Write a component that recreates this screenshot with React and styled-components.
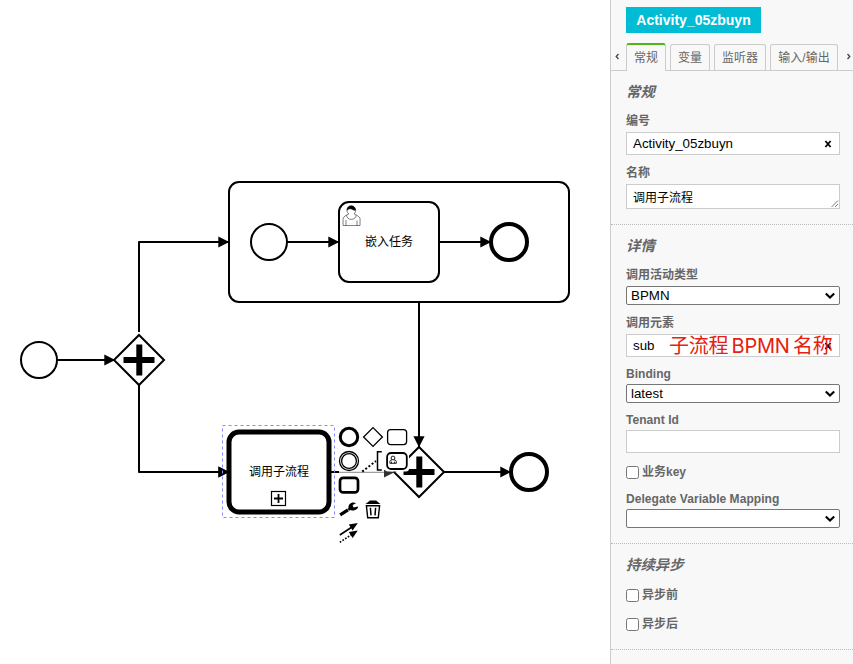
import React from "react";
import styled, { createGlobalStyle, css } from "styled-components";

const Global = createGlobalStyle`
  * { box-sizing: border-box; }
  body { margin: 0; background: #fff; overflow: hidden; }
`;

const Modeler = styled.main`
  display: flex;
  width: 853px;
  height: 664px;
  overflow: hidden;
  font-family: "Liberation Sans", "Noto Sans CJK SC", sans-serif;
`;

const Canvas = styled.section`
  position: relative;
  width: 610px;
  height: 664px;
  background: #fff;
`;

const Diagram = styled.svg`
  display: block;
  font-size: 12px;
`;

const ContextPad = styled.div`
  position: absolute;
  left: 337px;
  top: 425px;
  display: grid;
  grid-template-columns: repeat(3, 24px);
  grid-auto-rows: 24px;
`;

const PadIcon = styled.svg`
  width: 24px;
  height: 24px;
  overflow: visible;
  fill: none;
  stroke: #000;
  grid-column: ${(p) => p.$col};
  grid-row: ${(p) => p.$row};
`;

const Panel = styled.aside`
  width: 243px;
  height: 664px;
  background: #f8f8f8;
  border-left: 1px solid #ccc;
  color: #666;
`;

const Header = styled.header`
  height: 43px;
  padding: 7px 15px 0;
`;

const Badge = styled.div`
  width: 135px;
  height: 26px;
  line-height: 27px;
  text-align: center;
  background: #00bcd4;
  color: #fff;
  font-size: 14px;
  font-weight: bold;
  white-space: nowrap;
`;

const TabBar = styled.nav`
  display: flex;
  height: 28px;
  gap: 4px;
  border-bottom: 1px solid #ccc;
`;

const Arrow = styled.svg`
  width: ${(p) => p.$w}px;
  height: 27px;
  flex: none;
  fill: none;
  stroke: #444;
  stroke-width: 1.3;
`;

const Tab = styled.div`
  flex: none;
  width: ${(p) => p.$w}px;
  height: 26px;
  margin-top: 1px;
  line-height: 26px;
  text-align: center;
  font-size: 12px;
  white-space: nowrap;
  border: 1px solid #ccc;
  border-bottom: 0;
  border-radius: 3px 3px 0 0;
  ${(p) =>
    p.$active &&
    css`
      height: 28px;
      margin-top: 0;
      border-top: 2px solid #52b415;
      background: #f8f8f8;
    `}
`;

const Group = styled.section`
  padding: 11px 13px 15px 15px;
  border-bottom: 1px dotted #bbb;
`;

const GroupTitle = styled.h2`
  height: 20px;
  margin: 0;
  line-height: 20px;
  font-size: 14.4px;
  font-weight: bold;
  font-style: italic;
`;

const Label = styled.label`
  display: block;
  height: ${(p) => (p.$latin ? 14 : 16)}px;
  line-height: ${(p) => (p.$latin ? 17 : 18)}px;
  margin: ${(p) => (p.$first ? 10 : 9)}px 0 4px;
  font-size: 12px;
  letter-spacing: ${(p) => (p.$latin ? 0.05 : 0)}px;
  font-weight: bold;
  white-space: nowrap;
`;

const Box = styled.div`
  position: relative;
  display: flex;
  align-items: center;
  justify-content: space-between;
  width: 214px;
  height: ${(p) => p.$h || 23}px;
  padding: 0 7px 0 6px;
  border: 1px solid #ccc;
  background: #fff;
  color: #000;
  font-size: ${(p) => p.$size || 13.33}px;
  white-space: nowrap;
`;

const SelectBox = styled(Box)`
  height: 19px;
  padding: 0 3px 0 4px;
  border-color: #767676;
  border-radius: 2px;
`;

const Icon = styled.svg`
  flex: none;
  fill: none;
  stroke: #000;
`;

const Grip = styled.svg`
  position: absolute;
  right: 0;
  bottom: 0;
  fill: none;
  stroke: #777;
`;

const Note = styled.span`
  position: absolute;
  left: 42px;
  top: -4px;
  line-height: 30px;
  font-family: Inter, "Noto Sans CJK SC", sans-serif;
  font-size: 20px;
  word-spacing: -2px;
  letter-spacing: -0.25px;
  color: #e6210f;
`;

const CheckRow = styled.label`
  display: flex;
  align-items: center;
  gap: 3px;
  height: 20px;
  margin-top: ${(p) => (p.$first ? 10 : 9)}px;
  font-size: 12px;
  font-weight: bold;
  line-height: 16px;
`;

const Checkbox = styled.input.attrs({ type: "checkbox" })`
  appearance: none;
  width: 13px;
  height: 13px;
  margin: 1px 0 0;
  border: 1px solid #767676;
  border-radius: 2.5px;
  background: #fff;
`;

const CheckText = styled.span`
  margin-top: -1px;
`;

function Select({ children }) {
  return (
    <SelectBox>
      <span>{children}</span>
      <Icon width="12" height="12">
        <path d="M1.8 3.6 6 7.6 10.2 3.6" strokeWidth="2.1" />
      </Icon>
    </SelectBox>
  );
}

function Clear() {
  return (
    <Icon width="8" height="8">
      <path d="M1.4 1 6.6 7M6.6 1 1.4 7" strokeWidth="1.8" />
    </Icon>
  );
}

function Check({ label, first }) {
  return (
    <CheckRow $first={first}>
      <Checkbox />
      <CheckText>{label}</CheckText>
    </CheckRow>
  );
}

function Gateway({ x, y }) {
  return (
    <g>
      <path d={`M${x} ${y - 25}l25 25l-25 25l-25 -25z`} fill="#fff" stroke="#000" strokeWidth="2" />
      <path d={`M${x - 15.5} ${y}h31M${x + 0.3} ${y - 15.5}v31`} stroke="#000" strokeWidth="6" />
    </g>
  );
}

function UserGlyph({ x, y, width = 0.5 }) {
  const m = `m${x},${y}`;
  return (
    <g stroke="#000" strokeWidth={width} fill="#fff">
      <path d={`${m} c 0.909,-0.845 1.594,-2.049 1.594,-3.385 0,-2.554 -1.805,-4.622 -4.357,-4.622 -2.552,0 -4.288,2.068 -4.288,4.622 0,1.348 0.974,2.562 1.896,3.405 -0.529,0.187 -5.669,2.097 -5.794,4.756 v 6.718 h 17 v -6.718 c 0,-2.298 -5.528,-4.595 -6.051,-4.776z m -8,6 l 0,5.5 m 11,0 l 0,-5`} />
      <path d={`${m} m 2.162,1.009 c 0,2.447 -2.158,4.431 -4.821,4.431 -2.665,0 -4.822,-1.981 -4.822,-4.431`} />
      <path fill="#000" d={`${m} m -6.9,-3.8 c 0,0 2.251,-2.358 4.274,-1.177 2.024,1.181 4.221,1.537 4.124,0.965 -0.098,-0.57 -0.117,-3.791 -4.191,-4.136 -3.572,0 -4.205,2.94 -4.207,4.348z`} />
    </g>
  );
}

function ProcessDiagram() {
  return (
    <Diagram width="610" height="664" viewBox="0 0 610 664">
      <defs>
        <marker id="tip" viewBox="0 0 12 12" refX="11" refY="6" markerWidth="12" markerHeight="12" markerUnits="userSpaceOnUse" orient="auto">
          <path d="M0.3 0.4 L11.2 6 L0.3 11.6 Z" />
        </marker>
      </defs>
      <g fill="none" stroke="#000" strokeWidth="2">
        <rect x="229" y="182" width="340" height="120" rx="10" />
        <rect x="339" y="202" width="100" height="80" rx="10" />
        <circle cx="39" cy="360" r="18" />
        <circle cx="269" cy="242" r="18" />
        <circle cx="509" cy="242" r="18" strokeWidth="4" />
        <circle cx="529" cy="472" r="18" strokeWidth="4" />
      </g>
      <Gateway x={139} y={360} />
      <Gateway x={419} y={472} />
      <g fill="none" stroke="#000" strokeWidth="2" strokeLinejoin="round">
        <path d="M57 360H115" markerEnd="url(#tip)" />
        <path d="M139 332V242H229" markerEnd="url(#tip)" />
        <path d="M139 385V472H229" markerEnd="url(#tip)" />
        <path d="M287 242H339" markerEnd="url(#tip)" />
        <path d="M439 242H491" markerEnd="url(#tip)" />
        <path d="M419 302V447" markerEnd="url(#tip)" />
        <path d="M444 472H511" markerEnd="url(#tip)" />
      </g>
      <path d="M331 472H339" stroke="#000" strokeWidth="2" />
      <path d="M339 472.3H386" stroke="#888" strokeWidth="1" />
      <path d="M384 470V477.4L395 472Z" fill="#333" />
      <rect x="229" y="432" width="100" height="80" rx="10" fill="#fff" stroke="#000" strokeWidth="5" />
      <path d="M218.5 466.6L229 472L218.5 477.4Z" />
      <rect x="222.5" y="425.5" width="112" height="92" fill="none" stroke="#8888ff" strokeDasharray="3 3" />
      <rect x="271.5" y="491.5" width="14" height="14" fill="#fff" stroke="#000" strokeWidth="1.2" />
      <path d="M274 498.5H283M278.5 494V503" stroke="#000" strokeWidth="1.8" />
      <UserGlyph x={354} y={214} />
      <text x="389" y="246" textAnchor="middle">嵌入任务</text>
      <text x="279" y="476" textAnchor="middle">调用子流程</text>
      <rect x="385" y="450" width="24" height="21.5" rx="3" fill="#fff" />
    </Diagram>
  );
}

function ElementActions() {
  return (
    <ContextPad>
      <PadIcon $col={1} $row={1}><circle cx="12" cy="12" r="8.7" strokeWidth="3" /></PadIcon>
      <PadIcon $col={2} $row={1}><path d="M12 2.6 21.4 12 12 21.4 2.6 12Z" strokeWidth="1.3" /></PadIcon>
      <PadIcon $col={3} $row={1}><rect x="2.6" y="4.6" width="19" height="15" rx="3" strokeWidth="1.3" /></PadIcon>
      <PadIcon $col={1} $row={2} strokeWidth="1.3">
        <circle cx="12" cy="12" r="9.5" />
        <circle cx="12" cy="12" r="7.4" />
      </PadIcon>
      <PadIcon $col={2} $row={2}>
        <path d="M20.8 2.7H16.5V21H20.8" strokeWidth="1.5" />
        <path d="M1.2 22.6 15 12" strokeWidth="2" strokeDasharray="2 2" />
      </PadIcon>
      <PadIcon $col={3} $row={2}>
        <rect x="2.1" y="4" width="19.7" height="16" rx="4" strokeWidth="1.8" fill="#fff" />
        <circle cx="8" cy="9" r="1.9" strokeWidth="0.9" />
        <path d="M6.9 10.8Q4.9 11.2 4.9 12.6V14.3H11.3V12.6Q11.3 11.2 9.1 10.8M6.5 12.7V14M9.6 12.7V14" strokeWidth="0.9" />
      </PadIcon>
      <PadIcon $col={1} $row={3}><rect x="3" y="4.8" width="18" height="14.6" rx="3.2" strokeWidth="2.7" /></PadIcon>
      <PadIcon $col={1} $row={4}>
        <path d="M3.2 17.9 11 12.9" strokeWidth="3.2" />
        <path d="M11.4 11.2C11.2 7.2 14.5 4.2 19 6.2L15.6 8 16.5 10.6 21.2 9.4C20.5 12.8 17 14.6 13.4 12.9L12.2 13.8 10.8 12Z" fill="#000" stroke="none" />
      </PadIcon>
      <PadIcon $col={2} $row={4}>
        <path d="M4.6 7 8.9 3.6H15.1L19.4 7Z" fill="#000" stroke="none" />
        <path d="M5.4 8.7H18.6L17.3 20.7H6.7Z" strokeWidth="1.4" />
        <path d="M9.4 10.8 10 18.4M14.6 10.8 14 18.4" strokeWidth="1.5" />
      </PadIcon>
      <PadIcon $col={1} $row={5}>
        <path d="M2.8 14 15 6" strokeWidth="1.5" />
        <path d="M11.8 3.4 20.8 2 15.6 9.6Z" fill="#000" stroke="none" />
        <path d="M2.8 21.3 14.5 13.6" strokeWidth="1.6" strokeDasharray="1.7 1.5" />
        <path d="M11.8 10.9 20.8 9.5 15.6 17.1Z" fill="#000" stroke="none" />
      </PadIcon>
    </ContextPad>
  );
}

export default function App() {
  return (
    <Modeler>
      <Global />
      <Canvas>
        <ProcessDiagram />
        <ElementActions />
      </Canvas>
      <Panel>
        <Header><Badge>Activity_05zbuyn</Badge></Header>
        <TabBar>
          <Arrow $w={11}><path d="M7.5 11 5.2 13.5 7.5 16" /></Arrow>
          <Tab $w={40} $active>常规</Tab>
          <Tab $w={40}>变量</Tab>
          <Tab $w={52}>监听器</Tab>
          <Tab $w={68}>输入/输出</Tab>
          <Arrow $w={11}><path d="M5.5 11 7.8 13.5 5.5 16" /></Arrow>
        </TabBar>
        <Group>
          <GroupTitle>常规</GroupTitle>
          <Label $first>编号</Label>
          <Box><span>Activity_05zbuyn</span><Clear /></Box>
          <Label>名称</Label>
          <Box $h={25} $size={12}>
            <span>调用子流程</span>
            <Grip width="9" height="9"><path d="M1.5 8 8 1.5M5 8 8 5" /></Grip>
          </Box>
        </Group>
        <Group>
          <GroupTitle>详情</GroupTitle>
          <Label $first>调用活动类型</Label>
          <Select>BPMN</Select>
          <Label>调用元素</Label>
          <Box><span>sub</span><Clear /><Note>子流程 BPMN 名称</Note></Box>
          <Label $latin>Binding</Label>
          <Select>latest</Select>
          <Label $latin>Tenant Id</Label>
          <Box />
          <Check label="业务key" />
          <Label $latin>Delegate Variable Mapping</Label>
          <Select />
        </Group>
        <Group>
          <GroupTitle>持续异步</GroupTitle>
          <Check label="异步前" first />
          <Check label="异步后" />
        </Group>
      </Panel>
    </Modeler>
  );
}
